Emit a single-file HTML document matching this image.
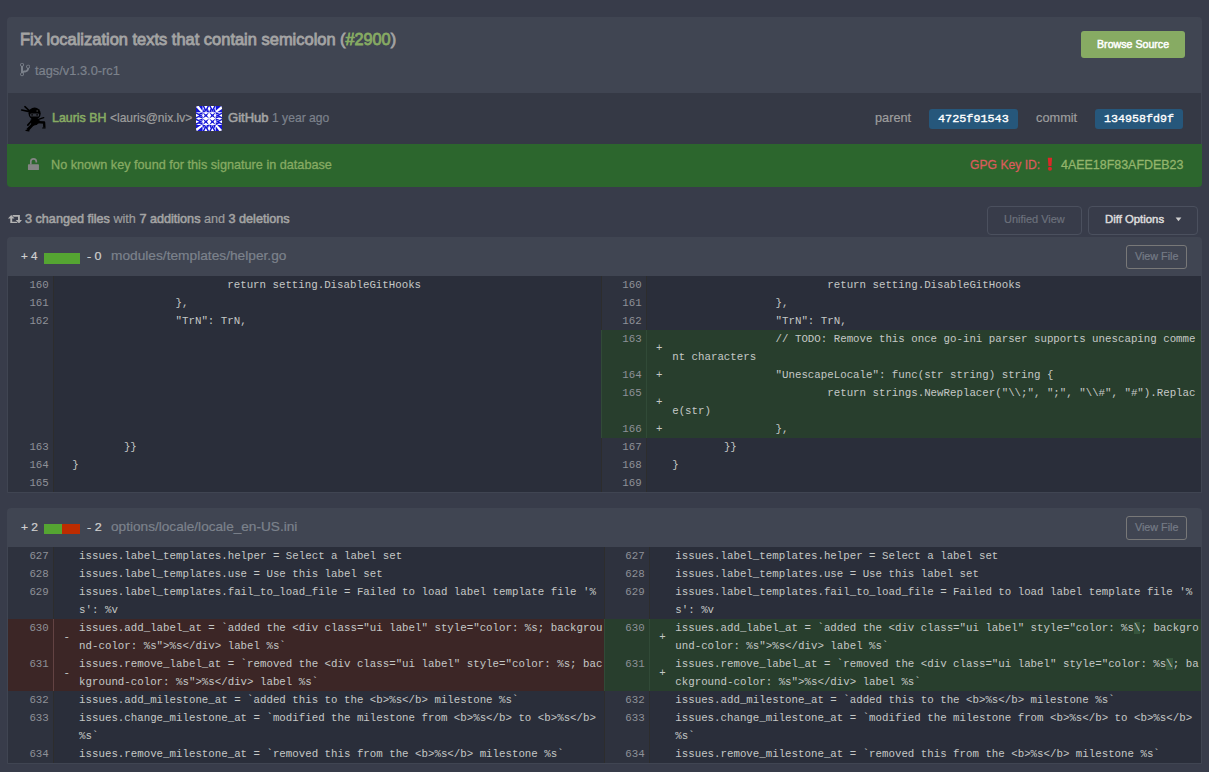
<!DOCTYPE html>
<html><head><meta charset="utf-8"><title>Commit</title><style>
html,body{margin:0;padding:0}
body{background:#383c4a;width:1209px;height:772px;overflow:hidden;position:relative;font-family:'Liberation Sans', sans-serif}
.b{position:absolute;display:block}
.t{position:absolute;white-space:nowrap;line-height:20px;transform-origin:0 0}
.c{position:absolute;margin:0;font-family:'Liberation Mono', monospace;font-size:10.77px;line-height:18px;color:#c5c8c6;tab-size:8;-moz-tab-size:8;white-space:pre}
.n{text-align:right;color:#8e9198}
</style></head><body>
<div class="b" style="left:7px;top:17px;width:1195px;height:76px;background:#404552;border-radius:4px 4px 0 0"></div>
<div class="b" style="left:7px;top:93px;width:1195px;height:51px;background:#353945;border-left:1px solid #404552;border-right:1px solid #404552;box-sizing:border-box"></div>
<div class="b" style="left:7px;top:144px;width:1195px;height:43px;background:#2c662d;border-radius:0 0 4px 4px"></div>
<div class="b" style="left:1081px;top:31px;width:104px;height:27px;background:#87ab63;border-radius:3px"></div>
<div class="b" style="left:929px;top:109px;width:89px;height:20px;background:#26577b;border-radius:3px"></div>
<div class="b" style="left:1095px;top:109px;width:88px;height:20px;background:#26577b;border-radius:3px"></div>
<div class="b" style="left:987px;top:206px;width:95px;height:29px;background:transparent;border:1px solid #4b505e;border-radius:4px;box-sizing:border-box"></div>
<div class="b" style="left:1088px;top:206px;width:110px;height:29px;background:transparent;border:1px solid #4b505e;border-radius:4px;box-sizing:border-box"></div>
<svg class="b" style="left:1170px;top:212px" width="16" height="14" viewBox="0 0 16 14"><path fill="#cfcfcf" d="M5.6 5.4H11.4L8.5 9.2z"/></svg>
<svg class="b" style="left:19.9px;top:62px" width="10.2" height="15.1" viewBox="0 0 10 16" preserveAspectRatio="none"><path fill="#7c828c" fill-rule="evenodd" d="M10 5c0-1.11-.89-2-2-2a1.993 1.993 0 0 0-1 3.72v.3c-.02.52-.23.98-.63 1.38-.4.4-.86.61-1.38.63-.83.02-1.48.16-2 .45V4.72a1.993 1.993 0 0 0-1-3.720C.88 1 0 1.890 0 3a2 2 0 0 0 1 1.720v6.560c-.59.35-1 .99-1 1.720 0 1.110.89 2 2 2 1.110 0 2-.89 2-2 0-.53-.2-1-.53-1.360.09-.06.48-.41.59-.47.25-.11.56-.17.94-.17 1.050-.05 1.950-.45 2.750-1.250S8.950 7.770 9 6.730h-.02C9.590 6.370 10 5.730 10 5zM2 1.800c.66 0 1.200.55 1.200 1.200 0 .65-.55 1.200-1.200 1.200C1.350 4.200.8 3.650.8 3c0-.65.55-1.200 1.200-1.200zm0 12.410c-.66 0-1.200-.55-1.200-1.200 0-.65.55-1.200 1.200-1.200.65 0 1.200.55 1.200 1.200 0 .65-.55 1.200-1.200 1.200zm6-8c-.66 0-1.200-.55-1.200-1.200 0-.65.55-1.200 1.200-1.200.65 0 1.200.55 1.200 1.200 0 .65-.55 1.200-1.200 1.200z"/></svg>
<svg class="b" style="left:27px;top:157px" width="14" height="14" viewBox="0 0 14 14"><rect x="0.95" y="7.2" width="11" height="5.9" rx="0.7" fill="#858585"/><path d="M3.8 7.4V4.6a2.75 2.75 0 0 1 5.5 0V5.4" fill="none" stroke="#858585" stroke-width="1.7"/></svg>
<svg class="b" style="left:1046px;top:157px" width="8" height="15" viewBox="0 0 8 15"><path fill="#db2828" d="M1.8 0.8h4.3l-.65 8.3h-3z"/><circle cx="3.95" cy="11.75" r="2.0" fill="#db2828"/></svg>
<svg class="b" style="left:7.9px;top:214.7px" width="14.2" height="8.4" viewBox="0 0 14.2 8.4"><path fill="#b4b4b4" d="M3.2 0L6.5 3.5H4.2V6.7H8.6L10 8.4H2.3V3.5H0z M11 8.4L7.7 4.9H10V1.7H5.6L4.2 0H11.9V4.9H14.2z"/></svg>
<svg class="b" style="left:20px;top:105px" width="26" height="27" viewBox="0 0 26 27">
<g fill="#000" stroke="#000" stroke-linecap="round" stroke-linejoin="round">
<circle cx="14.6" cy="8.5" r="6.1" stroke="none"/>
<path d="M9.4 6.6L1.7 5.0M9.6 6.0L4.9 1.7" stroke-width="1.6" fill="none"/>
<path d="M11.8 13.6L17.8 13.8L19.8 16.4L17 19.4L12.4 20.4L11 17z" stroke-width="0.8"/>
<path d="M12.6 14.8L7.8 20.1" stroke-width="1.7" fill="none"/>
<path d="M14.6 17.6L7.5 25" stroke-width="2.9" fill="none" stroke-linecap="butt"/>
<path d="M6.0 25.3L9.0 25.9" stroke-width="1.2" fill="none"/>
<path d="M17 17.1L24.1 17.5L24.4 22.6" stroke-width="2.3" fill="none" stroke-linecap="butt"/>
<path d="M22.6 23.0H25.2" stroke-width="1.0" fill="none"/>
<path d="M18.4 14.4L23.7 12.7" stroke-width="1.4" fill="none"/>
</g>
<rect x="10.1" y="8.4" width="9" height="3.1" rx="1" fill="#34373f"/>
<circle cx="12.1" cy="9.9" r="0.8" fill="#000"/><circle cx="17.1" cy="9.9" r="0.8" fill="#000"/>
<circle cx="17.2" cy="6.0" r="0.9" fill="#2c2c2c"/>
</svg>
<svg class="b" style="left:196px;top:106px;border-radius:2px" width="26.3" height="25.2" viewBox="0 0 24 24" preserveAspectRatio="none"><rect width="24" height="24" fill="#fff"/><path fill="#1414d6" d="M6 6L9 8L12 6L10 9L12 12L9 10L6 12L8 9z"/><path fill="#1414d6" d="M12 6L15 8L18 6L16 9L18 12L15 10L12 12L14 9z"/><path fill="#1414d6" d="M6 12L9 14L12 12L10 15L12 18L9 16L6 18L8 15z"/><path fill="#1414d6" d="M12 12L15 14L18 12L16 15L18 18L15 16L12 18L14 15z"/><path fill="#1414d6" d="M0.0 0.0 L6.0 0.0 L6.0 6.0 L0.0 6.0z"/><path fill="#fff" d="M0.4 0.0 L2.6 0.0 L6.0 4.8 L6.0 6.0 L4.6 6.0 L0.0 0.9z"/><path fill="#1414d6" d="M24.0 0.0 L24.0 6.0 L18.0 6.0 L18.0 0.0z"/><path fill="#fff" d="M24.0 0.4 L24.0 2.6 L19.2 6.0 L18.0 6.0 L18.0 4.6 L23.1 0.0z"/><path fill="#1414d6" d="M24.0 24.0 L18.0 24.0 L18.0 18.0 L24.0 18.0z"/><path fill="#fff" d="M23.6 24.0 L21.4 24.0 L18.0 19.2 L18.0 18.0 L19.4 18.0 L24.0 23.1z"/><path fill="#1414d6" d="M0.0 24.0 L0.0 18.0 L6.0 18.0 L6.0 24.0z"/><path fill="#fff" d="M0.0 23.6 L0.0 21.4 L4.8 18.0 L6.0 18.0 L6.0 19.4 L0.9 24.0z"/><path fill="#1414d6" d="M6 0L9 6L12 0L10.5 0L9 3L7.5 0z M6 6L7.2 2.5L8.4 6z M9.6 6L10.8 2.5L12 6z"/><path fill="#1414d6" d="M6 24L9 18L12 24L10.5 24L9 21L7.5 24z M6 18L7.2 21.5L8.4 18z M9.6 18L10.8 21.5L12 18z"/><path fill="#1414d6" d="M12 0L15 6L18 0L16.5 0L15 3L13.5 0z M12 6L13.2 2.5L14.4 6z M15.6 6L16.8 2.5L18 6z"/><path fill="#1414d6" d="M12 24L15 18L18 24L16.5 24L15 21L13.5 24z M12 18L13.2 21.5L14.4 18z M15.6 18L16.8 21.5L18 18z"/><path fill="#1414d6" d="M0 6L6 9L0 12L0 10.5L3 9L0 7.5z M6 6L2.5 7.2L6 8.4z M6 9.6L2.5 10.8L6 12z"/><path fill="#1414d6" d="M24 6L18 9L24 12L24 10.5L21 9L24 7.5z M18 6L21.5 7.2L18 8.4z M18 9.6L21.5 10.8L18 12z"/><path fill="#1414d6" d="M0 12L6 15L0 18L0 16.5L3 15L0 13.5z M6 12L2.5 13.2L6 14.4z M6 15.6L2.5 16.8L6 18z"/><path fill="#1414d6" d="M24 12L18 15L24 18L24 16.5L21 15L24 13.5z M18 12L21.5 13.2L18 14.4z M18 15.6L21.5 16.8L18 18z"/></svg>
<div class="b" style="left:7px;top:237px;width:1195px;height:39px;background:#404552;border-radius:4px 4px 0 0"></div>
<div class="b" style="left:44px;top:253px;width:36px;height:11px;background:#55a532;"></div>
<div class="b" style="left:1126px;top:245px;width:61px;height:24px;background:transparent;border:1px solid #787878;border-radius:3px;box-sizing:border-box"></div>
<div class="b" style="left:7px;top:276px;width:1195px;height:216px;background:#404552;"></div>
<div class="b" style="left:8px;top:276px;width:46px;height:18px;background:#2e323e;border-right:1px solid #2d2d2d;box-sizing:border-box"></div>
<div class="b" style="left:54px;top:276px;width:547px;height:18px;background:#2a2e3a;"></div>
<div class="b" style="left:601px;top:276px;width:46px;height:18px;background:#2e323e;border-right:1px solid #2d2d2d;border-left:1px solid #2d2d2d;box-sizing:border-box"></div>
<div class="b" style="left:647px;top:276px;width:554px;height:18px;background:#2a2e3a;"></div>
<pre class="c n" style="left:8px;width:40.8px;top:276px">160</pre>
<pre class="c n" style="left:601px;width:40.7px;top:276px">160</pre>
<pre class="c" style="left:72.2px;top:276px">			return setting.DisableGitHooks</pre>
<pre class="c" style="left:672.2px;top:276px">			return setting.DisableGitHooks</pre>
<div class="b" style="left:8px;top:294px;width:46px;height:18px;background:#2e323e;border-right:1px solid #2d2d2d;box-sizing:border-box"></div>
<div class="b" style="left:54px;top:294px;width:547px;height:18px;background:#2a2e3a;"></div>
<div class="b" style="left:601px;top:294px;width:46px;height:18px;background:#2e323e;border-right:1px solid #2d2d2d;border-left:1px solid #2d2d2d;box-sizing:border-box"></div>
<div class="b" style="left:647px;top:294px;width:554px;height:18px;background:#2a2e3a;"></div>
<pre class="c n" style="left:8px;width:40.8px;top:294px">161</pre>
<pre class="c n" style="left:601px;width:40.7px;top:294px">161</pre>
<pre class="c" style="left:72.2px;top:294px">		},</pre>
<pre class="c" style="left:672.2px;top:294px">		},</pre>
<div class="b" style="left:8px;top:312px;width:46px;height:18px;background:#2e323e;border-right:1px solid #2d2d2d;box-sizing:border-box"></div>
<div class="b" style="left:54px;top:312px;width:547px;height:18px;background:#2a2e3a;"></div>
<div class="b" style="left:601px;top:312px;width:46px;height:18px;background:#2e323e;border-right:1px solid #2d2d2d;border-left:1px solid #2d2d2d;box-sizing:border-box"></div>
<div class="b" style="left:647px;top:312px;width:554px;height:18px;background:#2a2e3a;"></div>
<pre class="c n" style="left:8px;width:40.8px;top:312px">162</pre>
<pre class="c n" style="left:601px;width:40.7px;top:312px">162</pre>
<pre class="c" style="left:72.2px;top:312px">		&quot;TrN&quot;: TrN,</pre>
<pre class="c" style="left:672.2px;top:312px">		&quot;TrN&quot;: TrN,</pre>
<div class="b" style="left:8px;top:330px;width:46px;height:36px;background:#2e323e;border-right:1px solid #2d2d2d;box-sizing:border-box"></div>
<div class="b" style="left:54px;top:330px;width:547px;height:36px;background:#2a2e3a;"></div>
<div class="b" style="left:601px;top:330px;width:46px;height:36px;background:#283e2d;border-right:1px solid #314a37;border-left:1px solid #314a37;box-sizing:border-box"></div>
<div class="b" style="left:647px;top:330px;width:554px;height:36px;background:#283e2d;"></div>
<pre class="c n" style="left:601px;width:40.7px;top:330px">163</pre>
<pre class="c" style="left:656.0px;top:339.0px">+</pre>
<pre class="c" style="left:672.2px;top:330px">		// TODO: Remove this once go-ini parser supports unescaping comme
nt characters</pre>
<div class="b" style="left:8px;top:366px;width:46px;height:18px;background:#2e323e;border-right:1px solid #2d2d2d;box-sizing:border-box"></div>
<div class="b" style="left:54px;top:366px;width:547px;height:18px;background:#2a2e3a;"></div>
<div class="b" style="left:601px;top:366px;width:46px;height:18px;background:#283e2d;border-right:1px solid #314a37;border-left:1px solid #314a37;box-sizing:border-box"></div>
<div class="b" style="left:647px;top:366px;width:554px;height:18px;background:#283e2d;"></div>
<pre class="c n" style="left:601px;width:40.7px;top:366px">164</pre>
<pre class="c" style="left:656.0px;top:366.0px">+</pre>
<pre class="c" style="left:672.2px;top:366px">		&quot;UnescapeLocale&quot;: func(str string) string {</pre>
<div class="b" style="left:8px;top:384px;width:46px;height:36px;background:#2e323e;border-right:1px solid #2d2d2d;box-sizing:border-box"></div>
<div class="b" style="left:54px;top:384px;width:547px;height:36px;background:#2a2e3a;"></div>
<div class="b" style="left:601px;top:384px;width:46px;height:36px;background:#283e2d;border-right:1px solid #314a37;border-left:1px solid #314a37;box-sizing:border-box"></div>
<div class="b" style="left:647px;top:384px;width:554px;height:36px;background:#283e2d;"></div>
<pre class="c n" style="left:601px;width:40.7px;top:384px">165</pre>
<pre class="c" style="left:656.0px;top:393.0px">+</pre>
<pre class="c" style="left:672.2px;top:384px">			return strings.NewReplacer(&quot;\\;&quot;, &quot;;&quot;, &quot;\\#&quot;, &quot;#&quot;).Replac
e(str)</pre>
<div class="b" style="left:8px;top:420px;width:46px;height:18px;background:#2e323e;border-right:1px solid #2d2d2d;box-sizing:border-box"></div>
<div class="b" style="left:54px;top:420px;width:547px;height:18px;background:#2a2e3a;"></div>
<div class="b" style="left:601px;top:420px;width:46px;height:18px;background:#283e2d;border-right:1px solid #314a37;border-left:1px solid #314a37;box-sizing:border-box"></div>
<div class="b" style="left:647px;top:420px;width:554px;height:18px;background:#283e2d;"></div>
<pre class="c n" style="left:601px;width:40.7px;top:420px">166</pre>
<pre class="c" style="left:656.0px;top:420.0px">+</pre>
<pre class="c" style="left:672.2px;top:420px">		},</pre>
<div class="b" style="left:8px;top:438px;width:46px;height:18px;background:#2e323e;border-right:1px solid #2d2d2d;box-sizing:border-box"></div>
<div class="b" style="left:54px;top:438px;width:547px;height:18px;background:#2a2e3a;"></div>
<div class="b" style="left:601px;top:438px;width:46px;height:18px;background:#2e323e;border-right:1px solid #2d2d2d;border-left:1px solid #2d2d2d;box-sizing:border-box"></div>
<div class="b" style="left:647px;top:438px;width:554px;height:18px;background:#2a2e3a;"></div>
<pre class="c n" style="left:8px;width:40.8px;top:438px">163</pre>
<pre class="c n" style="left:601px;width:40.7px;top:438px">167</pre>
<pre class="c" style="left:72.2px;top:438px">	}}</pre>
<pre class="c" style="left:672.2px;top:438px">	}}</pre>
<div class="b" style="left:8px;top:456px;width:46px;height:18px;background:#2e323e;border-right:1px solid #2d2d2d;box-sizing:border-box"></div>
<div class="b" style="left:54px;top:456px;width:547px;height:18px;background:#2a2e3a;"></div>
<div class="b" style="left:601px;top:456px;width:46px;height:18px;background:#2e323e;border-right:1px solid #2d2d2d;border-left:1px solid #2d2d2d;box-sizing:border-box"></div>
<div class="b" style="left:647px;top:456px;width:554px;height:18px;background:#2a2e3a;"></div>
<pre class="c n" style="left:8px;width:40.8px;top:456px">164</pre>
<pre class="c n" style="left:601px;width:40.7px;top:456px">168</pre>
<pre class="c" style="left:72.2px;top:456px">}</pre>
<pre class="c" style="left:672.2px;top:456px">}</pre>
<div class="b" style="left:8px;top:474px;width:46px;height:18px;background:#2e323e;border-right:1px solid #2d2d2d;box-sizing:border-box"></div>
<div class="b" style="left:54px;top:474px;width:547px;height:18px;background:#2a2e3a;"></div>
<div class="b" style="left:601px;top:474px;width:46px;height:18px;background:#2e323e;border-right:1px solid #2d2d2d;border-left:1px solid #2d2d2d;box-sizing:border-box"></div>
<div class="b" style="left:647px;top:474px;width:554px;height:18px;background:#2a2e3a;"></div>
<pre class="c n" style="left:8px;width:40.8px;top:474px">165</pre>
<pre class="c n" style="left:601px;width:40.7px;top:474px">169</pre>
<div class="b" style="left:7px;top:492px;width:1195px;height:1px;background:#404552;border-radius:0 0 3px 3px"></div>
<div class="b" style="left:7px;top:508px;width:1195px;height:39px;background:#404552;border-radius:4px 4px 0 0"></div>
<div class="b" style="left:44px;top:524px;width:18px;height:10px;background:#55a532;"></div>
<div class="b" style="left:62px;top:524px;width:18px;height:10px;background:#bd2c00;"></div>
<div class="b" style="left:1126px;top:516px;width:61px;height:24px;background:transparent;border:1px solid #787878;border-radius:3px;box-sizing:border-box"></div>
<div class="b" style="left:7px;top:547px;width:1195px;height:216px;background:#404552;"></div>
<div class="b" style="left:8px;top:547px;width:46px;height:18px;background:#2e323e;border-right:1px solid #2d2d2d;box-sizing:border-box"></div>
<div class="b" style="left:54px;top:547px;width:550px;height:18px;background:#2a2e3a;"></div>
<div class="b" style="left:604px;top:547px;width:46px;height:18px;background:#2e323e;border-right:1px solid #2d2d2d;border-left:1px solid #2d2d2d;box-sizing:border-box"></div>
<div class="b" style="left:650px;top:547px;width:551px;height:18px;background:#2a2e3a;"></div>
<pre class="c n" style="left:8px;width:40.8px;top:547px">627</pre>
<pre class="c n" style="left:604px;width:40.7px;top:547px">627</pre>
<pre class="c" style="left:79.1px;top:547px">issues.label_templates.helper = Select a label set</pre>
<pre class="c" style="left:675.3px;top:547px">issues.label_templates.helper = Select a label set</pre>
<div class="b" style="left:8px;top:565px;width:46px;height:18px;background:#2e323e;border-right:1px solid #2d2d2d;box-sizing:border-box"></div>
<div class="b" style="left:54px;top:565px;width:550px;height:18px;background:#2a2e3a;"></div>
<div class="b" style="left:604px;top:565px;width:46px;height:18px;background:#2e323e;border-right:1px solid #2d2d2d;border-left:1px solid #2d2d2d;box-sizing:border-box"></div>
<div class="b" style="left:650px;top:565px;width:551px;height:18px;background:#2a2e3a;"></div>
<pre class="c n" style="left:8px;width:40.8px;top:565px">628</pre>
<pre class="c n" style="left:604px;width:40.7px;top:565px">628</pre>
<pre class="c" style="left:79.1px;top:565px">issues.label_templates.use = Use this label set</pre>
<pre class="c" style="left:675.3px;top:565px">issues.label_templates.use = Use this label set</pre>
<div class="b" style="left:8px;top:583px;width:46px;height:36px;background:#2e323e;border-right:1px solid #2d2d2d;box-sizing:border-box"></div>
<div class="b" style="left:54px;top:583px;width:550px;height:36px;background:#2a2e3a;"></div>
<div class="b" style="left:604px;top:583px;width:46px;height:36px;background:#2e323e;border-right:1px solid #2d2d2d;border-left:1px solid #2d2d2d;box-sizing:border-box"></div>
<div class="b" style="left:650px;top:583px;width:551px;height:36px;background:#2a2e3a;"></div>
<pre class="c n" style="left:8px;width:40.8px;top:583px">629</pre>
<pre class="c n" style="left:604px;width:40.7px;top:583px">629</pre>
<pre class="c" style="left:79.1px;top:583px">issues.label_templates.fail_to_load_file = Failed to load label template file &#x27;%
s&#x27;: %v</pre>
<pre class="c" style="left:675.3px;top:583px">issues.label_templates.fail_to_load_file = Failed to load label template file &#x27;%
s&#x27;: %v</pre>
<div class="b" style="left:8px;top:619px;width:46px;height:36px;background:#3c2626;border-right:1px solid #634343;box-sizing:border-box"></div>
<div class="b" style="left:54px;top:619px;width:550px;height:36px;background:#3c2626;"></div>
<div class="b" style="left:604px;top:619px;width:46px;height:36px;background:#283e2d;border-right:1px solid #314a37;border-left:1px solid #314a37;box-sizing:border-box"></div>
<div class="b" style="left:650px;top:619px;width:551px;height:36px;background:#283e2d;"></div>
<pre class="c n" style="left:8px;width:40.8px;top:619px">630</pre>
<pre class="c n" style="left:604px;width:40.7px;top:619px">630</pre>
<pre class="c" style="left:63.4px;top:628.0px">-</pre>
<pre class="c" style="left:659.2px;top:628.0px">+</pre>
<pre class="c" style="left:79.1px;top:619px">issues.add_label_at = `added the &lt;div class=&quot;ui label&quot; style=&quot;color: %s; backgrou
nd-color: %s&quot;&gt;%s&lt;/div&gt; label %s`</pre>
<pre class="c" style="left:675.3px;top:619px">issues.add_label_at = `added the &lt;div class=&quot;ui label&quot; style=&quot;color: %s<span style="background:#36553c">\</span>; backgro
und-color: %s&quot;&gt;%s&lt;/div&gt; label %s`</pre>
<div class="b" style="left:8px;top:655px;width:46px;height:36px;background:#3c2626;border-right:1px solid #634343;box-sizing:border-box"></div>
<div class="b" style="left:54px;top:655px;width:550px;height:36px;background:#3c2626;"></div>
<div class="b" style="left:604px;top:655px;width:46px;height:36px;background:#283e2d;border-right:1px solid #314a37;border-left:1px solid #314a37;box-sizing:border-box"></div>
<div class="b" style="left:650px;top:655px;width:551px;height:36px;background:#283e2d;"></div>
<pre class="c n" style="left:8px;width:40.8px;top:655px">631</pre>
<pre class="c n" style="left:604px;width:40.7px;top:655px">631</pre>
<pre class="c" style="left:63.4px;top:664.0px">-</pre>
<pre class="c" style="left:659.2px;top:664.0px">+</pre>
<pre class="c" style="left:79.1px;top:655px">issues.remove_label_at = `removed the &lt;div class=&quot;ui label&quot; style=&quot;color: %s; bac
kground-color: %s&quot;&gt;%s&lt;/div&gt; label %s`</pre>
<pre class="c" style="left:675.3px;top:655px">issues.remove_label_at = `removed the &lt;div class=&quot;ui label&quot; style=&quot;color: %s<span style="background:#36553c">\</span>; ba
ckground-color: %s&quot;&gt;%s&lt;/div&gt; label %s`</pre>
<div class="b" style="left:8px;top:691px;width:46px;height:18px;background:#2e323e;border-right:1px solid #2d2d2d;box-sizing:border-box"></div>
<div class="b" style="left:54px;top:691px;width:550px;height:18px;background:#2a2e3a;"></div>
<div class="b" style="left:604px;top:691px;width:46px;height:18px;background:#2e323e;border-right:1px solid #2d2d2d;border-left:1px solid #2d2d2d;box-sizing:border-box"></div>
<div class="b" style="left:650px;top:691px;width:551px;height:18px;background:#2a2e3a;"></div>
<pre class="c n" style="left:8px;width:40.8px;top:691px">632</pre>
<pre class="c n" style="left:604px;width:40.7px;top:691px">632</pre>
<pre class="c" style="left:79.1px;top:691px">issues.add_milestone_at = `added this to the &lt;b&gt;%s&lt;/b&gt; milestone %s`</pre>
<pre class="c" style="left:675.3px;top:691px">issues.add_milestone_at = `added this to the &lt;b&gt;%s&lt;/b&gt; milestone %s`</pre>
<div class="b" style="left:8px;top:709px;width:46px;height:36px;background:#2e323e;border-right:1px solid #2d2d2d;box-sizing:border-box"></div>
<div class="b" style="left:54px;top:709px;width:550px;height:36px;background:#2a2e3a;"></div>
<div class="b" style="left:604px;top:709px;width:46px;height:36px;background:#2e323e;border-right:1px solid #2d2d2d;border-left:1px solid #2d2d2d;box-sizing:border-box"></div>
<div class="b" style="left:650px;top:709px;width:551px;height:36px;background:#2a2e3a;"></div>
<pre class="c n" style="left:8px;width:40.8px;top:709px">633</pre>
<pre class="c n" style="left:604px;width:40.7px;top:709px">633</pre>
<pre class="c" style="left:79.1px;top:709px">issues.change_milestone_at = `modified the milestone from &lt;b&gt;%s&lt;/b&gt; to &lt;b&gt;%s&lt;/b&gt;
%s`</pre>
<pre class="c" style="left:675.3px;top:709px">issues.change_milestone_at = `modified the milestone from &lt;b&gt;%s&lt;/b&gt; to &lt;b&gt;%s&lt;/b&gt;
%s`</pre>
<div class="b" style="left:8px;top:745px;width:46px;height:18px;background:#2e323e;border-right:1px solid #2d2d2d;box-sizing:border-box"></div>
<div class="b" style="left:54px;top:745px;width:550px;height:18px;background:#2a2e3a;"></div>
<div class="b" style="left:604px;top:745px;width:46px;height:18px;background:#2e323e;border-right:1px solid #2d2d2d;border-left:1px solid #2d2d2d;box-sizing:border-box"></div>
<div class="b" style="left:650px;top:745px;width:551px;height:18px;background:#2a2e3a;"></div>
<pre class="c n" style="left:8px;width:40.8px;top:745px">634</pre>
<pre class="c n" style="left:604px;width:40.7px;top:745px">634</pre>
<pre class="c" style="left:79.1px;top:745px">issues.remove_milestone_at = `removed this from the &lt;b&gt;%s&lt;/b&gt; milestone %s`</pre>
<pre class="c" style="left:675.3px;top:745px">issues.remove_milestone_at = `removed this from the &lt;b&gt;%s&lt;/b&gt; milestone %s`</pre>
<div class="b" style="left:7px;top:763px;width:1195px;height:1px;background:#404552;border-radius:0 0 3px 3px"></div>
<div class="t" style="left:19.92px;top:29.00px;font-family:'Liberation Sans', sans-serif;font-size:16.2px;font-weight:normal;color:#a4a4a4;transform:scaleX(1.0167);-webkit-text-stroke:0.8px">Fix localization texts that contain semicolon</div>
<div class="t" style="left:339.56px;top:29.00px;font-family:'Liberation Sans', sans-serif;font-size:16.2px;font-weight:normal;color:#a4a4a4;transform:scaleX(1.0048);-webkit-text-stroke:0.8px">(<span style="color:#87ab63">#2900</span>)</div>
<div class="t" style="left:35.16px;top:60.60px;font-family:'Liberation Sans', sans-serif;font-size:12.6px;font-weight:normal;color:#7c828c;transform:scaleX(1.0193);-webkit-text-stroke:0.2px">tags/v1.3.0-rc1</div>
<div class="t" style="left:52.37px;top:107.60px;font-family:'Liberation Sans', sans-serif;font-size:12.6px;font-weight:normal;color:#87ab63;transform:scaleX(0.9850);-webkit-text-stroke:0.55px">Lauris BH</div>
<div class="t" style="left:110.37px;top:107.60px;font-family:'Liberation Sans', sans-serif;font-size:12.6px;font-weight:normal;color:#9e9e9e;transform:scaleX(0.9520);-webkit-text-stroke:0.2px">&lt;lauris@nix.lv&gt;</div>
<div class="t" style="left:228.14px;top:107.60px;font-family:'Liberation Sans', sans-serif;font-size:12.6px;font-weight:normal;color:#a4a4a4;transform:scaleX(1.0349);-webkit-text-stroke:0.55px">GitHub</div>
<div class="t" style="left:271.92px;top:107.60px;font-family:'Liberation Sans', sans-serif;font-size:12.6px;font-weight:normal;color:#7c828c;transform:scaleX(0.9629);-webkit-text-stroke:0.2px">1 year ago</div>
<div class="t" style="left:875.36px;top:107.60px;font-family:'Liberation Sans', sans-serif;font-size:12.6px;font-weight:normal;color:#9e9e9e;transform:scaleX(1.0122);-webkit-text-stroke:0.2px">parent</div>
<div class="t" style="left:1035.57px;top:107.60px;font-family:'Liberation Sans', sans-serif;font-size:12.6px;font-weight:normal;color:#9e9e9e;transform:scaleX(1.0141);-webkit-text-stroke:0.2px">commit</div>
<div class="t" style="left:51.28px;top:154.90px;font-family:'Liberation Sans', sans-serif;font-size:13.2px;font-weight:normal;color:#87ab63;transform:scaleX(0.9602);-webkit-text-stroke:0.3px">No known key found for this signature in database</div>
<div class="t" style="left:969.77px;top:154.90px;font-family:'Liberation Sans', sans-serif;font-size:13.2px;font-weight:normal;color:#d95c5c;transform:scaleX(0.9214);-webkit-text-stroke:0.3px">GPG Key ID:</div>
<div class="t" style="left:1060.74px;top:154.90px;font-family:'Liberation Sans', sans-serif;font-size:13.2px;font-weight:normal;color:#93b56c;transform:scaleX(0.9438);-webkit-text-stroke:0.3px">4AEE18F83AFDEB23</div>
<div class="t" style="left:24.97px;top:208.60px;font-family:'Liberation Sans', sans-serif;font-size:12.6px;font-weight:normal;color:#9e9e9e;transform:scaleX(1.0022);-webkit-text-stroke:0.2px"><span style="color:#a4a4a4;-webkit-text-stroke:0.55px">3 changed files</span> with <span style="color:#a4a4a4;-webkit-text-stroke:0.55px">7 additions</span> and <span style="color:#a4a4a4;-webkit-text-stroke:0.55px">3 deletions</span></div>
<div class="t" style="left:1096.86px;top:34.20px;font-family:'Liberation Sans', sans-serif;font-size:11.7px;font-weight:normal;color:#ffffff;transform:scaleX(0.9091);-webkit-text-stroke:0.5px">Browse Source</div>
<div class="t" style="left:1003.95px;top:209.10px;font-family:'Liberation Sans', sans-serif;font-size:11.7px;font-weight:normal;color:#6c717c;transform:scaleX(0.9382);-webkit-text-stroke:0.2px">Unified View</div>
<div class="t" style="left:1105.02px;top:209.10px;font-family:'Liberation Sans', sans-serif;font-size:11.7px;font-weight:normal;color:#dbdbdb;transform:scaleX(0.9709);-webkit-text-stroke:0.5px">Diff Options</div>
<div class="t" style="left:20.56px;top:245.90px;font-family:'Liberation Sans', sans-serif;font-size:10.8px;font-weight:normal;color:#d0d0d0;transform:scaleX(1.0725);-webkit-text-stroke:0.2px">+ 4</div>
<div class="t" style="left:86.53px;top:245.90px;font-family:'Liberation Sans', sans-serif;font-size:10.8px;font-weight:normal;color:#d0d0d0;transform:scaleX(1.1549);-webkit-text-stroke:0.2px">- 0</div>
<div class="t" style="left:110.97px;top:245.90px;font-family:'Liberation Sans', sans-serif;font-size:12.6px;font-weight:normal;color:#7c828c;transform:scaleX(1.0893);-webkit-text-stroke:0.2px">modules/templates/helper.go</div>
<div class="t" style="left:1134.99px;top:246.00px;font-family:'Liberation Sans', sans-serif;font-size:10.8px;font-weight:normal;color:#757b86;transform:scaleX(0.9968);-webkit-text-stroke:0.2px">View File</div>
<div class="t" style="left:20.54px;top:516.90px;font-family:'Liberation Sans', sans-serif;font-size:10.8px;font-weight:normal;color:#d0d0d0;transform:scaleX(1.1141);-webkit-text-stroke:0.2px">+ 2</div>
<div class="t" style="left:86.53px;top:516.90px;font-family:'Liberation Sans', sans-serif;font-size:10.8px;font-weight:normal;color:#d0d0d0;transform:scaleX(1.1606);-webkit-text-stroke:0.2px">- 2</div>
<div class="t" style="left:111.23px;top:516.90px;font-family:'Liberation Sans', sans-serif;font-size:12.6px;font-weight:normal;color:#7c828c;transform:scaleX(1.0820);-webkit-text-stroke:0.2px">options/locale/locale_en-US.ini</div>
<div class="t" style="left:1134.99px;top:517.00px;font-family:'Liberation Sans', sans-serif;font-size:10.8px;font-weight:normal;color:#757b86;transform:scaleX(0.9968);-webkit-text-stroke:0.2px">View File</div>
<div class="t" style="left:938.24px;top:109.40px;font-family:'Liberation Mono', monospace;font-size:11.7px;font-weight:normal;color:#ffffff;transform:scaleX(1.0091);-webkit-text-stroke:0.35px">4725f91543</div>
<div class="t" style="left:1103.85px;top:109.40px;font-family:'Liberation Mono', monospace;font-size:11.7px;font-weight:normal;color:#ffffff;transform:scaleX(0.9985);-webkit-text-stroke:0.35px">134958fd9f</div>
</body></html>
